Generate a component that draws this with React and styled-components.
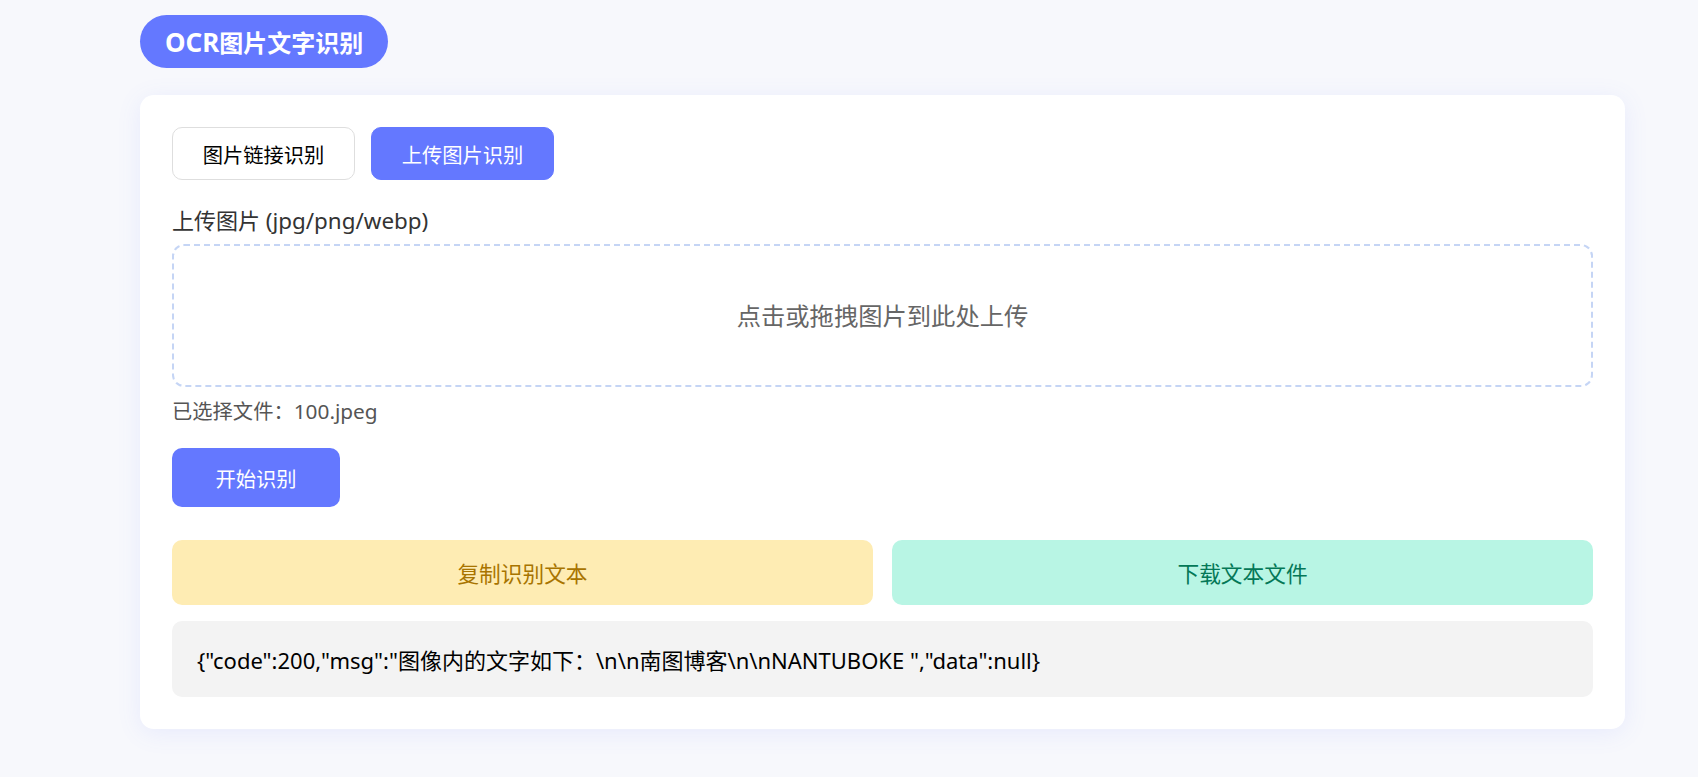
import React from "react";
import styled, { createGlobalStyle } from "styled-components";

const GlobalStyle = createGlobalStyle`
  html, body {
    margin: 0;
    padding: 0;
    background: #f7f8fc;
  }
  body {
    font-family: "Noto Sans", "Noto Sans CJK SC", sans-serif;
  }
`;

const Page = styled.div`
  box-sizing: border-box;
  min-height: 777px;
  padding: 15px 73px 0 140px;
`;

const Title = styled.h1`
  display: inline-block;
  margin: 0 0 27px;
  padding: 0 25px;
  height: 53px;
  line-height: 54px;
  border-radius: 27px;
  background: #6478ff;
  color: #fff;
  font-size: 24px;
  font-weight: 700;
`;

const TitleLatin = styled.span`
  font-size: 26px;
`;

const Card = styled.div`
  box-sizing: border-box;
  padding: 32px;
  background: #fff;
  border-radius: 14px;
  box-shadow: 0 4px 24px rgba(100, 120, 255, 0.1);
`;

const Tabs = styled.div`
  display: flex;
  gap: 16px;
  margin-bottom: 24px;
`;

const Tab = styled.button`
  box-sizing: border-box;
  width: 183px;
  height: 53px;
  padding: 1px 0 0;
  border-radius: 10px;
  border: 1px solid ${(p) => (p.$active ? "#6478ff" : "#dedede")};
  background: ${(p) => (p.$active ? "#6478ff" : "#fff")};
  color: ${(p) => (p.$active ? "#fff" : "#000")};
  font: inherit;
  font-size: 20.3px;
`;

const Label = styled.div`
  color: #333;
  font-size: 22px;
  line-height: 32px;
  margin-bottom: 7px;
`;

const LabelLatin = styled.span`
  font-size: 22.4px;
`;

const DropZone = styled.div`
  box-sizing: border-box;
  height: 143px;
  padding-bottom: 3px;
  display: flex;
  align-items: center;
  justify-content: center;
  border: 2px dashed #c5d5f5;
  border-radius: 12px;
  color: #666;
  font-size: 24.3px;
`;

const FileName = styled.div`
  color: #555;
  font-size: 20.3px;
  line-height: 30px;
  margin: 9px 0 22px;
`;

const FileNameLatin = styled.span`
  font-size: 20.8px;
`;

const StartButton = styled.button`
  display: block;
  width: 168px;
  height: 59px;
  padding: 0;
  border: none;
  border-radius: 10px;
  background: #6478ff;
  color: #fff;
  font: inherit;
  font-size: 20.3px;
  margin-bottom: 33px;
`;

const Actions = styled.div`
  display: grid;
  grid-template-columns: 1fr 1fr;
  gap: 19.2px;
  margin-bottom: 16px;
`;

const ActionButton = styled.button`
  height: 65px;
  padding: 0;
  border: none;
  border-radius: 10px;
  background: ${(p) => p.$bg};
  color: ${(p) => p.$fg};
  font: inherit;
  font-size: 21.7px;
`;

const Result = styled.div`
  box-sizing: border-box;
  height: 76px;
  padding: 0 25px;
  display: flex;
  align-items: center;
  background: #f3f3f3;
  border-radius: 10px;
  color: #000;
  font-size: 22px;
`;

export default function App() {
  return (
    <Page>
      <GlobalStyle />
      <Title><TitleLatin>OCR</TitleLatin>图片文字识别</Title>
      <Card>
        <Tabs>
          <Tab>图片链接识别</Tab>
          <Tab $active>上传图片识别</Tab>
        </Tabs>
        <Label>上传图片 <LabelLatin>(jpg/png/webp)</LabelLatin></Label>
        <DropZone>点击或拖拽图片到此处上传</DropZone>
        <FileName>已选择文件：<FileNameLatin>100.jpeg</FileNameLatin></FileName>
        <StartButton>开始识别</StartButton>
        <Actions>
          <ActionButton $bg="#feecb3" $fg="#a87400">复制识别文本</ActionButton>
          <ActionButton $bg="#b8f5e4" $fg="#047857">下载文本文件</ActionButton>
        </Actions>
        <Result>{'{"code":200,"msg":"图像内的文字如下：\\n\\n南图博客\\n\\nNANTUBOKE ","data":null}'}</Result>
      </Card>
    </Page>
  );
}
